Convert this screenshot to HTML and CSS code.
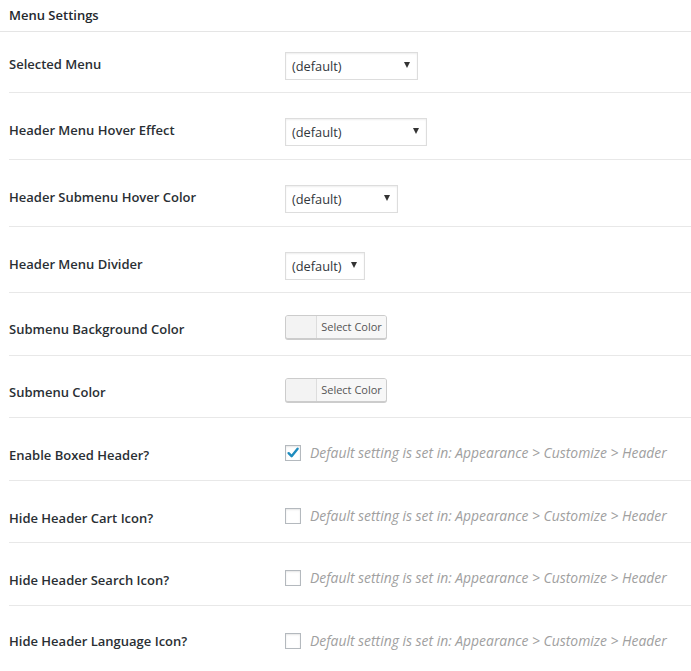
FILE: index.html
```html
<!DOCTYPE html>
<html>
<head>
<meta charset="utf-8">
<link rel="stylesheet" href="styles.css">
</head>
<body>
<div class="panel">
  <div class="panel-head">Menu Settings</div>
  <div class="rows">
    <div class="row row-first">
      <div class="label">Selected Menu</div>
      <div class="control"><div class="select w133"><span>(default)</span><span class="arrow"></span></div></div>
    </div>
    <div class="row row-select">
      <div class="label">Header Menu Hover Effect</div>
      <div class="control"><div class="select w142"><span>(default)</span><span class="arrow"></span></div></div>
    </div>
    <div class="row row-select">
      <div class="label">Header Submenu Hover Color</div>
      <div class="control"><div class="select w113"><span>(default)</span><span class="arrow"></span></div></div>
    </div>
    <div class="row row-select2">
      <div class="label">Header Menu Divider</div>
      <div class="control"><div class="select w80"><span>(default)</span><span class="arrow"></span></div></div>
    </div>
    <div class="row row-color">
      <div class="label">Submenu Background Color</div>
      <div class="control"><div class="color-btn"><span class="swatch"></span><span class="color-text">Select Color</span></div></div>
    </div>
    <div class="row row-color2">
      <div class="label">Submenu Color</div>
      <div class="control"><div class="color-btn"><span class="swatch"></span><span class="color-text">Select Color</span></div></div>
    </div>
    <div class="row row-check">
      <div class="label">Enable Boxed Header?</div>
      <div class="control check-line">
        <span class="checkbox checked"><svg viewBox="0 0 16 16" width="16" height="16"><path d="M3.6 8.2 L6.6 11.2 L12.6 3.8" fill="none" stroke="#1e8cbe" stroke-width="2.4" stroke-linecap="round" stroke-linejoin="round"/></svg></span>
        <span class="hint">Default setting is set in: Appearance &gt; Customize &gt; Header</span>
      </div>
    </div>
    <div class="row row-check2">
      <div class="label">Hide Header Cart Icon?</div>
      <div class="control check-line">
        <span class="checkbox"></span>
        <span class="hint">Default setting is set in: Appearance &gt; Customize &gt; Header</span>
      </div>
    </div>
    <div class="row row-check">
      <div class="label">Hide Header Search Icon?</div>
      <div class="control check-line">
        <span class="checkbox"></span>
        <span class="hint">Default setting is set in: Appearance &gt; Customize &gt; Header</span>
      </div>
    </div>
    <div class="row row-last">
      <div class="label">Hide Header Language Icon?</div>
      <div class="control check-line">
        <span class="checkbox"></span>
        <span class="hint">Default setting is set in: Appearance &gt; Customize &gt; Header</span>
      </div>
    </div>
  </div>
</div>
</body>
</html>
```

FILE: styles.css
```css
html, body {
  margin: 0;
  padding: 0;
  background: #fff;
}
body {
  font-family: "Open Sans", "Noto Sans", sans-serif;
  color: #23282d;
  overflow: hidden;
}
.panel-head {
  height: 32px;
  box-sizing: border-box;
  padding: 6px 0 0 9px;
  font-size: 13px;
  font-weight: 600;
  line-height: 18px;
  color: #23282d;
  border-bottom: 1px solid #e5e5e5;
}
.rows {
  padding-left: 9px;
}
.row {
  display: grid;
  grid-template-columns: 276px 1fr;
  align-items: start;
  border-bottom: 1px solid #e8e8e8;
  box-sizing: border-box;
}
.row-first { height: 61px; }
.row-select { height: 67px; }
.row-select2 { height: 66px; }
.row-color { height: 63px; }
.row-color2 { height: 62px; }
.row-check { height: 63px; }
.row-check2 { height: 62px; }
.row-last { height: 70px; border-bottom: none; }

.label {
  font-size: 13px;
  font-weight: 600;
  line-height: 18px;
  color: #2a2f34;
  white-space: nowrap;
}
.row-first .label { padding-top: 23px; }
.row-first .control { padding-top: 20px; }
.row-select .label, .row-select2 .label { padding-top: 28px; }
.row-select .control, .row-select2 .control { padding-top: 25px; }
.row-color .label, .row-color2 .label { padding-top: 27px; }
.row-color .control, .row-color2 .control { padding-top: 22px; }
.row-check .label, .row-check2 .label { padding-top: 28px; }
.row-last .label { padding-top: 26px; }
.row-check .control, .row-check2 .control, .row-last .control { padding-top: 26px; }

.select {
  display: flex;
  align-items: center;
  justify-content: space-between;
  height: 28px;
  box-sizing: border-box;
  border: 1px solid #ddd;
  box-shadow: inset 0 1px 2px rgba(0,0,0,0.07);
  background: #fff;
  padding: 0 7px 0 6px;
  font-size: 12.8px;
  color: #32373c;
}
.w133 { width: 133px; }
.w142 { width: 142px; }
.w113 { width: 113px; }
.w80 { width: 80px; }
.arrow {
  width: 0;
  height: 0;
  border-left: 3px solid transparent;
  border-right: 3px solid transparent;
  border-top: 6px solid #333;
  margin-top: -2px;
}

.color-btn {
  display: inline-flex;
  width: 102px;
  height: 24px;
  box-sizing: border-box;
  border: 1px solid #ccc;
  border-radius: 3px;
  box-shadow: 0 1px 0 #ccc;
  background: #f7f7f7;
  overflow: hidden;
}
.swatch {
  width: 30px;
  background: #f3f3f3;
  border-right: 1px solid #ddd;
}
.color-text {
  flex: 1;
  font-size: 11px;
  line-height: 22px;
  color: #555;
  text-align: center;
  background: #f7f7f7;
}

.check-line {
  display: flex;
  align-items: center;
}
.checkbox {
  display: inline-block;
  width: 16px;
  height: 16px;
  box-sizing: border-box;
  border: 1px solid #b4b9be;
  box-shadow: inset 0 1px 2px rgba(0,0,0,0.1);
  background: #fff;
  margin-right: 9px;
  flex: none;
  position: relative;
}
.checkbox svg {
  position: absolute;
  left: -1px;
  top: -1px;
}
.hint {
  font-size: 13.9px;
  font-style: italic;
  color: #a0a0a0;
  white-space: nowrap;
  line-height: 18px;
}
```
